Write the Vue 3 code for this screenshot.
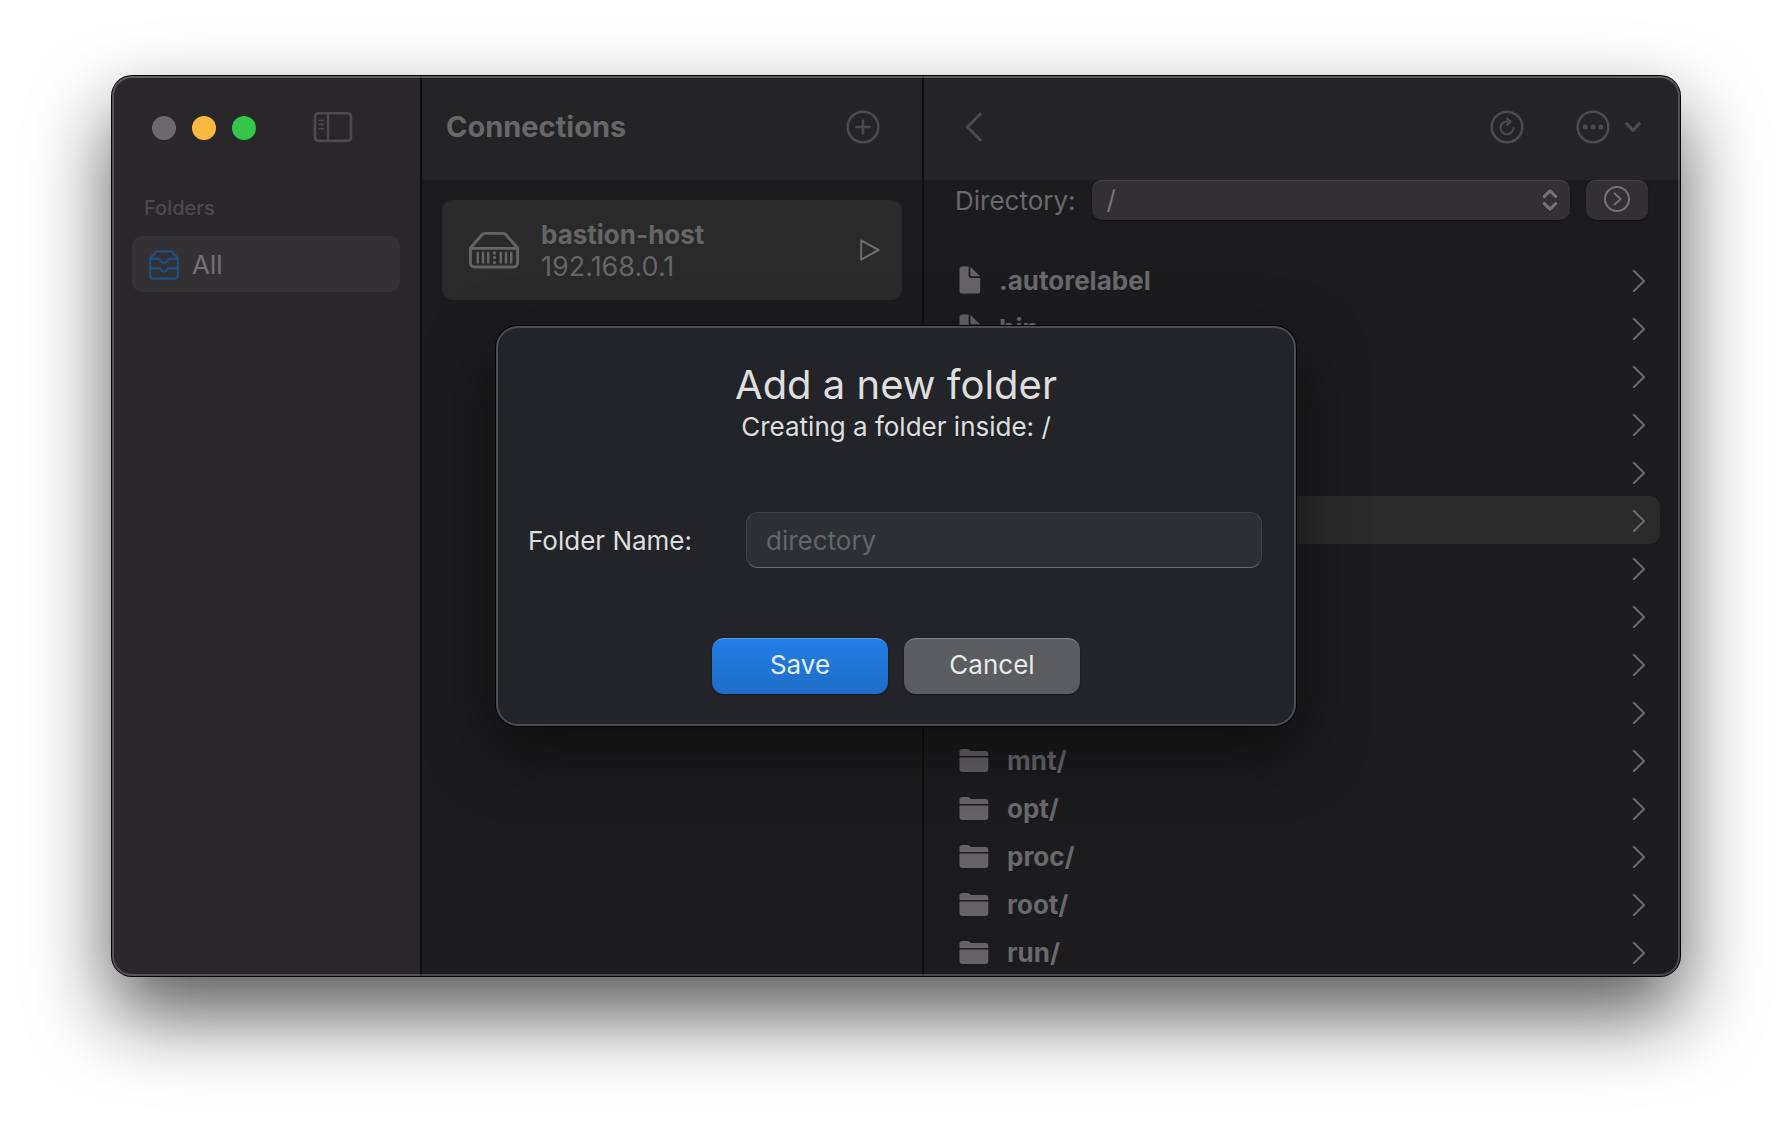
<script setup>
import { ref } from 'vue'

const folderName = ref('')
const directory = ref('/')

const entries = [
  { name: '.autorelabel', type: 'file' },
  { name: 'bin', type: 'file' },
  { name: 'lib', type: 'file' },
  { name: 'lib64', type: 'file' },
  { name: 'sbin', type: 'file' },
  { name: 'boot/', type: 'folder' },
  { name: 'dev/', type: 'folder' },
  { name: 'etc/', type: 'folder' },
  { name: 'home/', type: 'folder' },
  { name: 'media/', type: 'folder' },
  { name: 'mnt/', type: 'folder' },
  { name: 'opt/', type: 'folder' },
  { name: 'proc/', type: 'folder' },
  { name: 'root/', type: 'folder' },
  { name: 'run/', type: 'folder' },
]
const selected = 'boot/'
</script>

<template>
  <div class="desktop">
    <main class="window">
      <aside class="sidebar">
        <div class="titlebar">
          <div class="lights">
            <button class="light close" type="button" aria-label="Close"></button>
            <button class="light minimize" type="button" aria-label="Minimize"></button>
            <button class="light zoom" type="button" aria-label="Zoom"></button>
          </div>
          <button class="icon-button" type="button" aria-label="Toggle sidebar">
            <svg width="40" height="32" viewBox="0 0 40 32" fill="none" stroke="currentColor">
              <rect x="2" y="1.300" width="36" height="27.600" rx="3.5" stroke-width="2.6" />
              <path d="M15 1.500v27" stroke-width="2.4" />
              <path d="M6.5 8.200h4M6.5 12.400h4M6.5 16.700h4" stroke-width="1.6" stroke-linecap="round" />
            </svg>
          </button>
        </div>
        <h2 class="section-title">Folders</h2>
        <a class="folder-link" href="#">
          <svg width="30" height="30" viewBox="0 0 30 30" fill="none" stroke="#20507f" stroke-width="2.2" stroke-linejoin="round">
            <path d="M1.2 8L7.6 1.3h14.8L28.8 8v18a2.6 2.6 0 0 1-2.6 2.6H3.8A2.6 2.6 0 0 1 1.2 26z" />
            <path d="M1.2 8.8h8.600c1.200 0 1.400 1 2 2.200a3.600 3.600 0 0 0 6.400 0c.600-1.200.800-2.200 2-2.200h8.600" />
            <path d="M1.2 18.400h9.600c.800 0 .900.700 1.200 1.400a3.300 3.300 0 0 0 6 0c.300-.700.400-1.400 1.200-1.400h9.600" />
          </svg>
          All
        </a>
      </aside>

      <section class="connections">
        <header class="toolbar">
          <h1 class="toolbar-title">Connections</h1>
          <button class="icon-button" type="button" aria-label="Add connection">
            <svg width="34" height="34" viewBox="0 0 34 34" fill="none" stroke="currentColor" stroke-width="2.5" stroke-linecap="round">
              <circle cx="17" cy="17" r="15.3" />
              <path d="M17 10.4v13.2M10.4 17h13.2" />
            </svg>
          </button>
        </header>
        <article class="card">
          <svg width="52" height="38" viewBox="0 0 52 38" fill="none" stroke="currentColor" stroke-linejoin="round">
            <path d="M2.4 17L14 3.8a4 4 0 0 1 3-1.4h18a4 4 0 0 1 3 1.4L49.6 17v15a4 4 0 0 1-4 4H6.4a4 4 0 0 1-4-4z" stroke-width="2.9" />
            <path d="M3 17.4h46" stroke-width="2.9" />
            <path d="M9.8 22v9.4M15 22v9.4M20.2 22v9.4M32.8 22v9.4M38 22v9.4M43.2 22v9.4" stroke-width="2.5" stroke-linecap="round" />
            <path d="M26.5 22v0M26.5 26.7v0M26.5 31.4v0" stroke-width="3.3" stroke-linecap="round" />
          </svg>
          <div class="card-text">
            <h3 class="card-name">bastion-host</h3>
            <p class="card-address">192.168.0.1</p>
          </div>
          <button class="icon-button play" type="button" aria-label="Connect">
            <svg width="20" height="22" viewBox="0 0 20 22" fill="none" stroke="currentColor" stroke-width="2" stroke-linejoin="round">
              <path d="M1.2 1.4L18.6 11L1.2 20.6z" />
            </svg>
          </button>
        </article>
      </section>

      <section class="browser">
        <header class="toolbar browser-toolbar">
          <button class="icon-button back" type="button" aria-label="Back">
            <svg width="18" height="30" viewBox="0 0 18 30" fill="none" stroke="currentColor" stroke-width="2.8" stroke-linecap="round" stroke-linejoin="round">
              <path d="M15.4 2L2.4 15L15.4 28" />
            </svg>
          </button>
          <button class="icon-button" type="button" aria-label="Refresh">
            <svg width="34" height="34" viewBox="0 0 34 34" fill="none" stroke="currentColor" stroke-linecap="round">
              <circle cx="17" cy="17" r="15.3" stroke-width="2.5" />
              <path d="M17.6 11.6A6.4 6.4 0 1 0 23.4 18" stroke-width="2" />
              <path d="M17 8.4L20.6 11.7L17 15" stroke-width="2" stroke-linejoin="round" />
            </svg>
          </button>
          <button class="icon-button more" type="button" aria-label="More actions">
            <svg width="34" height="34" viewBox="0 0 34 34" fill="currentColor">
              <circle cx="17" cy="17" r="15.3" fill="none" stroke="currentColor" stroke-width="2.5" />
              <circle cx="9.2" cy="17" r="2.5" />
              <circle cx="17" cy="17" r="2.5" />
              <circle cx="24.8" cy="17" r="2.5" />
            </svg>
            <svg width="18" height="12" viewBox="0 0 18 12" fill="none" stroke="currentColor" stroke-width="3.2" stroke-linecap="round" stroke-linejoin="round">
              <path d="M2.6 2.6L9 9.4L15.4 2.6" />
            </svg>
          </button>
        </header>

        <div class="directory">
          <label class="directory-label" for="directory">Directory:</label>
          <div class="select-wrap">
            <select id="directory" v-model="directory" class="directory-select">
              <option value="/">/</option>
            </select>
            <svg class="select-arrows" width="16" height="24" viewBox="0 0 16 24" fill="none" stroke="currentColor" stroke-width="3" stroke-linecap="round" stroke-linejoin="round">
              <path d="M2.4 8.4L8 2.8L13.6 8.4M2.4 15.6L8 21.2L13.6 15.6" />
            </svg>
          </div>
          <button class="go" type="button" aria-label="Go to directory">
            <svg width="28" height="28" viewBox="0 0 28 28" fill="none" stroke="currentColor" stroke-width="2" stroke-linecap="round" stroke-linejoin="round">
              <circle cx="14" cy="13" r="12" />
              <path d="M11.6 7.4L17.6 13L11.6 18.6" />
            </svg>
          </button>
        </div>

        <ul class="entries">
          <li
            v-for="entry in entries"
            :key="entry.name"
            class="entry"
            :class="{ selected: entry.name === selected }"
          >
            <svg v-if="entry.type === 'file'" class="entry-icon" width="22" height="28" viewBox="0 0 22 28" fill="currentColor">
              <path d="M3 .5h6.6v9.2a2.2 2.2 0 0 0 2.2 2.2h9.4V25a2.5 2.5 0 0 1-2.5 2.5H3A2.5 2.5 0 0 1 .5 25V3A2.5 2.5 0 0 1 3 .5z" />
              <path d="M11.4.7L21 10.3h-8.4a1.2 1.2 0 0 1-1.2-1.2z" />
            </svg>
            <svg v-else class="entry-icon" width="30" height="24" viewBox="0 0 30 24" fill="currentColor">
              <path d="M.5 7.9V3.7A2.7 2.7 0 0 1 3.2 1h5c2.3 0 2.4 2 4.6 2h13.5a3 3 0 0 1 3 3v1.9z" />
              <path d="M.5 9.6h28.8V21a3 3 0 0 1-3 3H3.5a3 3 0 0 1-3-3z" />
            </svg>
            <span class="entry-name">{{ entry.name }}</span>
            <svg width="14" height="24" viewBox="0 0 14 24" fill="none" stroke="currentColor" stroke-width="2.200" stroke-linecap="round" stroke-linejoin="round">
              <path d="M2 3L12 13L2 23" />
            </svg>
          </li>
        </ul>
      </section>

      <div class="sheet-layer">
        <form class="sheet" role="dialog" aria-labelledby="sheet-title" @submit.prevent>
          <h2 id="sheet-title" class="sheet-title">Add a new folder</h2>
          <p class="sheet-subtitle">Creating a folder inside: /</p>
          <div class="field">
            <label class="field-label" for="folder-name">Folder Name:</label>
            <input id="folder-name" v-model="folderName" class="field-input" type="text" placeholder="directory" />
          </div>
          <div class="actions">
            <button class="action primary" type="submit">Save</button>
            <button class="action" type="button">Cancel</button>
          </div>
        </form>
      </div>
    </main>
  </div>
</template>

<style>
body {
  margin: 0;
  background: #fff;
}
</style>

<style scoped>
* {
  box-sizing: border-box;
}

h1,
h2,
h3,
p,
ul {
  margin: 0;
  padding: 0;
}

button,
input,
select {
  margin: 0;
  font: inherit;
}

svg {
  display: block;
  flex: none;
}

.desktop {
  display: flex;
  min-height: 100vh;
  padding: 76px 112px 148px;
  overflow: hidden;
  font-family: Inter, "Liberation Sans", sans-serif;
  font-size: 26px;
  line-height: 32px;
  color: #69686a;
}

.window {
  position: relative;
  display: grid;
  flex: 1;
  grid-template-columns: 308px 502px minmax(0, 1fr);
  border-radius: 20px;
  background: #1c1c1e;
  box-shadow: 0 0 0 1px #050505, 0 38px 80px rgba(0, 0, 0, 0.66);
}

.window::after {
  content: "";
  position: absolute;
  inset: 0;
  border: 2px solid rgba(255, 255, 255, 0.2);
  border-top-color: rgba(255, 255, 255, 0.26);
  border-radius: 20px;
  pointer-events: none;
}

.icon-button {
  display: flex;
  align-items: center;
  padding: 0;
  border: 0;
  background: none;
  color: #4b4b4c;
}

/* Sidebar */
.sidebar {
  padding: 0 20px;
  border-radius: 20px 0 0 20px;
  background: #2a272a;
}

.titlebar {
  display: flex;
  align-items: center;
  gap: 57px;
  height: 104px;
  padding-left: 20px;
}

.lights {
  display: flex;
  gap: 16px;
}

.light {
  width: 24px;
  height: 24px;
  padding: 0;
  border: 0;
  border-radius: 50%;
}

.close {
  background: #6d6a6e;
}

.minimize {
  background: #fdb93f;
}

.zoom {
  background: #35c649;
}

.section-title {
  padding: 12px 12px;
  font-size: 20px;
  line-height: 32px;
  font-weight: 500;
  color: #4b494c;
}

.folder-link {
  display: flex;
  align-items: center;
  gap: 13px;
  height: 56px;
  padding: 2px 17px 0;
  border-radius: 10px;
  background: #343134;
  color: #737173;
  text-decoration: none;
}

/* Toolbars */
.toolbar {
  display: flex;
  align-items: center;
  justify-content: space-between;
  height: 104px;
  padding: 0 42px 2px 24px;
  background: #242426;
}

.toolbar-title {
  font-size: 29px;
  line-height: 36px;
  font-weight: 700;
  color: #676768;
}

/* Connections */
.connections {
  border-left: 2px solid #0f0f10;
}

.card {
  display: flex;
  align-items: center;
  height: 100px;
  margin: 20px;
  padding: 0 22px 0 26px;
  border-radius: 10px;
  background: #2a2a2b;
  color: #656566;
}

.card-text {
  flex: 1;
  padding: 2px 0 0 21px;
}

.card-name {
  font-size: 26px;
  font-weight: 700;
}

.card-address {
  font-size: 27px;
}

.play {
  color: #6d6d6e;
}

/* File browser */
.browser {
  border-left: 2px solid #0f0f10;
}

.browser-toolbar {
  gap: 52px;
  padding: 0 38px 2px 41px;
  border-top-right-radius: 20px;
}

.back {
  margin-right: auto;
}

.more {
  gap: 14px;
}

.directory {
  display: flex;
  height: 40px;
  padding: 0 32px 0 31px;
}

.directory-label {
  line-height: 42px;
}

.select-wrap {
  display: flex;
  flex: 1;
  align-items: center;
  margin: 0 16px;
}

.directory-select,
.go {
  height: 40px;
  border: 0;
  border-radius: 10px;
  background: #333033;
  box-shadow: inset 0 1px 0 #434144, 0 1px 2px rgba(0, 0, 0, 0.4);
  color: #757376;
}

.directory-select {
  width: 100%;
  padding: 0 15px;
  appearance: none;
}

.select-arrows {
  margin-left: -28px;
  margin-right: 12px;
  color: #757376;
  pointer-events: none;
  z-index: 1;
}

.go {
  display: flex;
  align-items: center;
  justify-content: center;
  width: 62px;
  padding: 0;
}

.entries {
  padding: 36px 20px 0;
  list-style: none;
}

.entry {
  display: flex;
  align-items: center;
  height: 48px;
  padding: 0 14px 0 15px;
  border-radius: 10px;
  font-weight: 700;
}

.selected {
  background: #2a2a2b;
}

.entry-icon {
  color: #656366;
}

.entry-name {
  flex: 1;
  padding: 2px 0 0 18px;
}

/* Sheet */
.sheet-layer {
  position: absolute;
  inset: 0;
  display: flex;
  align-items: center;
  justify-content: center;
}

.sheet {
  width: 800px;
  max-width: 100%;
  padding: 33px 32px 32px;
  border-radius: 22px;
  background: #23242a;
  box-shadow: inset 0 0 0 2px #4c4d51, 0 0 0 1px #000, 0 24px 64px rgba(0, 0, 0, 0.5);
  color: #dedede;
  text-align: center;
}

.sheet-title {
  font-size: 40px;
  line-height: 52px;
  font-weight: 400;
}

.field {
  display: flex;
  align-items: center;
  justify-content: space-between;
  height: 56px;
  margin: 69px 0 70px;
  padding-right: 2px;
}

.field-label {
  padding-top: 2px;
}

.field-input {
  width: 516px;
  height: 56px;
  padding: 0 19px;
  border: 1px solid #414247;
  border-bottom-color: #6a6b6f;
  border-radius: 12px;
  outline: 0;
  background: #2e2f34;
  color: #dedede;
}

.field-input::placeholder {
  color: #646569;
  opacity: 1;
}

.actions {
  display: flex;
  justify-content: center;
  gap: 16px;
}

.action {
  width: 176px;
  height: 56px;
  padding: 0 0 2px;
  border: 0;
  border-radius: 12px;
  background: #5b5c5f;
  box-shadow: inset 0 2px 1px -1px rgba(255, 255, 255, 0.25), 0 1px 2px rgba(0, 0, 0, 0.4);
  color: #e8e8e8;
}

.primary {
  background: linear-gradient(#217fe6, #1f6cc6);
  color: #e4effb;
}
</style>
